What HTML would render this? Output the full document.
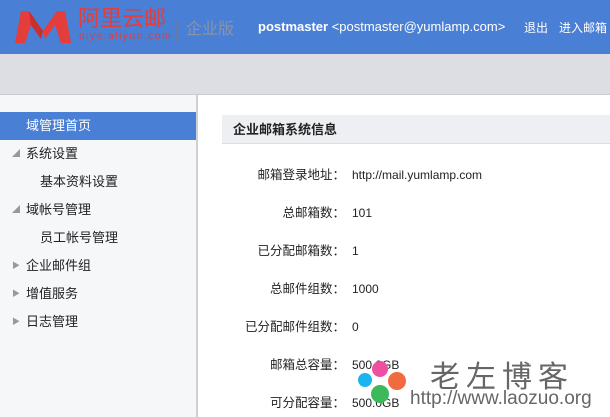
<!DOCTYPE html>
<html><head><meta charset="utf-8"><style>
body{margin:0;width:610px;height:417px;overflow:hidden;font-family:"Liberation Sans","Noto Sans CJK SC",sans-serif;font-size:12px;color:#333;background:#fff;position:relative}
.abs{position:absolute;white-space:nowrap}
.hdr{position:absolute;left:0;top:0;width:610px;height:54px;background:#4a7fd6}
.bar{position:absolute;left:0;top:54px;width:610px;height:40px;background:#dddee3;border-bottom:1px solid #c9cacf}
.side{position:absolute;left:0;top:95px;width:196px;height:322px;background:#f6f7f9;border-right:2px solid #cfd0d4}
.it{position:absolute;left:0;width:196px;height:28px;line-height:28px;font-size:13px;color:#222}
.tri{position:absolute;left:12px;top:0;font-size:8px;color:#999}
.sec{position:absolute;left:222px;top:115px;width:388px;height:28px;background:#eeeff2;border-bottom:1px solid #dcdde0;font-weight:bold;font-size:13px;line-height:29px;color:#222}
.lb{position:absolute;right:265px;font-size:12.5px;line-height:16px;color:#222;text-align:right}
.vl{position:absolute;left:352px;font-size:12px;line-height:16px;color:#222}
</style></head><body>
<div class="hdr"></div>
<svg class="abs" style="left:15px;top:9px" width="56" height="36" viewBox="0 0 56 36">
<polygon points="6,2 14,2 28,22 26,30 16,16 10,34 0,34" fill="#e53c3c"/>
<polygon points="42,2 50,2 56,34 46,34 40,16 30,30 28,22" fill="#e53c3c"/>
<polygon points="14,2 28,22 26,30 16,16" fill="#c92f2f"/>
</svg>
<div class="abs" style="left:78px;top:7px;font-size:22px;line-height:24px;color:#e53c3c">阿里云邮</div>
<div class="abs" style="left:79px;top:31px;font-size:10px;line-height:11px;color:#d84040;letter-spacing:1.6px">qiye.aliyun.com</div>
<div class="abs" style="left:176px;top:22px;width:1px;height:19px;background:#6a7aa0"></div>
<div class="abs" style="left:186px;top:20px;font-size:16px;line-height:20px;color:#8a93a8">企业版</div>
<div class="abs" style="left:258px;top:19px;font-size:13px;color:#fff"><b>postmaster</b> &lt;postmaster@yumlamp.com&gt;</div>
<div class="abs" style="left:524px;top:19px;font-size:12px;color:#fff">退出</div>
<div class="abs" style="left:559px;top:19px;font-size:12px;color:#fff">进入邮箱</div>
<div class="bar"></div>
<div class="side">
<div class="it" style="top:17px;background:#4a7fd6;color:#fff"><span style="position:absolute;left:26px">域管理首页</span></div>
<div class="it" style="top:45px"><span class="tri">◢</span><span style="position:absolute;left:26px">系统设置</span></div>
<div class="it" style="top:73px"><span style="position:absolute;left:40px">基本资料设置</span></div>
<div class="it" style="top:101px"><span class="tri">◢</span><span style="position:absolute;left:26px">域帐号管理</span></div>
<div class="it" style="top:129px"><span style="position:absolute;left:40px">员工帐号管理</span></div>
<div class="it" style="top:157px"><span class="tri">▶</span><span style="position:absolute;left:26px">企业邮件组</span></div>
<div class="it" style="top:185px"><span class="tri">▶</span><span style="position:absolute;left:26px">增值服务</span></div>
<div class="it" style="top:213px"><span class="tri">▶</span><span style="position:absolute;left:26px">日志管理</span></div>
</div>
<div class="sec"><span style="padding-left:11px">企业邮箱系统信息</span></div>
<div class="lb" style="top:167px">邮箱登录地址：</div><div class="vl" style="top:167px">http://mail.yumlamp.com</div>
<div class="lb" style="top:205px">总邮箱数：</div><div class="vl" style="top:205px">101</div>
<div class="lb" style="top:243px">已分配邮箱数：</div><div class="vl" style="top:243px">1</div>
<div class="lb" style="top:281px">总邮件组数：</div><div class="vl" style="top:281px">1000</div>
<div class="lb" style="top:319px">已分配邮件组数：</div><div class="vl" style="top:319px">0</div>
<div class="lb" style="top:357px">邮箱总容量：</div><div class="vl" style="top:357px">500.0GB</div>
<div class="lb" style="top:395px">可分配容量：</div><div class="vl" style="top:395px">500.0GB</div>
<svg class="abs" style="left:355px;top:357px" width="55" height="50">
<circle cx="25" cy="12" r="8" fill="#ee4f9e"/><circle cx="10" cy="23" r="7" fill="#1ab5ee"/>
<circle cx="42" cy="24" r="9" fill="#f26b3e"/><circle cx="25" cy="37" r="9" fill="#3cb95a"/>
</svg>
<div class="abs" style="left:430px;top:352px;font-size:30px;color:#666;letter-spacing:6px">老左博客</div>
<div class="abs" style="left:410px;top:388px;font-size:19px;color:#666">http://www.laozuo.org</div>
</body></html>
